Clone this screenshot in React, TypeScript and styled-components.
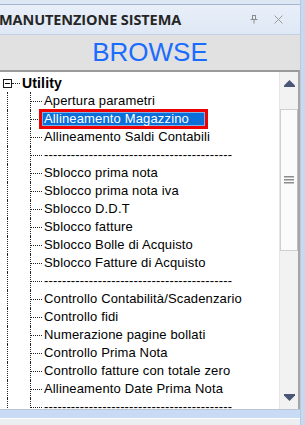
import React from "react";
import styled, { createGlobalStyle } from "styled-components";

const Global = createGlobalStyle`
  html, body {
    margin: 0;
    padding: 0;
    background: #dbe5f3;
  }
`;

const Frame = styled.div`
  width: 305px;
  height: 425px;
  display: flex;
  overflow: hidden;
  background: #dbe5f3;
`;

const Panel = styled.div`
  width: 300px;
  display: flex;
  flex-direction: column;
`;

const SideStrip = styled.div`
  flex: 1;
  background: #c8d8ef;
  border-left: 1px solid #b7c8e2;
`;

const TopStrip = styled.div`
  height: 4px;
  background: #dde6f3;
  border-bottom: 1px solid #a4b6d1;
`;

const TitleBar = styled.div`
  height: 29px;
  display: flex;
  align-items: center;
  background: linear-gradient(#e8eff9, #dfe8f5);
  border-bottom: 1px solid #c3d0e5;
  padding-right: 10px;
`;

const Title = styled.div`
  flex: 1;
  margin-left: -1px;
  font-family: "Open Sans", "Noto Sans", sans-serif;
  font-weight: 700;
  font-size: 14.5px;
  color: #262626;
  letter-spacing: -0.1px;
  white-space: nowrap;
`;

const TitleIcon = styled.span`
  width: 24px;
  display: flex;
  justify-content: center;
`;

const BrowseBand = styled.div`
  height: 35px;
  display: flex;
  align-items: center;
  justify-content: center;
  background: #e1e1e1;
  font-family: "Liberation Sans", Arial, sans-serif;
  font-size: 26px;
  color: #1a6cff;
`;

const TreeFrame = styled.div`
  height: 337px;
  display: flex;
  border-top: 2px solid #9a9a9a;
  border-right: 2px solid #a6a6a6;
  background: #fff;
`;

const Tree = styled.div`
  flex: 1;
  overflow: hidden;
  padding-top: 2px;
  font-family: "Liberation Sans", Arial, sans-serif;
  font-size: 13px;
  letter-spacing: 0.15px;
  color: #000;
`;

const Row = styled.div`
  height: 18px;
  display: flex;
  align-items: center;
`;

const ExpandBox = styled.span`
  box-sizing: border-box;
  width: 9px;
  height: 9px;
  margin-left: 3px;
  border: 1px solid #1a1a1a;
  display: flex;
  align-items: center;
  justify-content: center;
  &::after {
    content: "";
    width: 5px;
    height: 1px;
    background: #000;
  }
`;

const Connector = styled.span<{ $w: number }>`
  width: ${(p) => p.$w}px;
  border-top: 1px dotted #222;
`;

const Trunk = styled.span`
  align-self: stretch;
  margin-left: 7px;
  width: 22px;
  border-left: 1px dotted #222;
`;

const Branch = styled.span`
  align-self: stretch;
  display: flex;
  align-items: center;
  border-left: 1px dotted #222;
`;

const Label = styled.span<{ $bold?: boolean; $selected?: boolean }>`
  padding: 0 ${(p) => (p.$selected ? 16 : 2)}px 0 2px;
  line-height: 14px;
  white-space: nowrap;
  font-size: ${(p) => (p.$bold ? 14 : 13)}px;
  font-weight: ${(p) => (p.$bold ? 700 : 400)};
  background: ${(p) => (p.$selected ? "#0a6fd8" : "transparent")};
  color: ${(p) => (p.$selected ? "#fff" : "#000")};
  outline: ${(p) => (p.$selected ? "3px solid #f00000" : "none")};
  box-shadow: ${(p) => (p.$selected ? "inset 0 0 0 1px #7fb0ea" : "none")};
`;

const ScrollBar = styled.div`
  width: 18px;
  display: flex;
  flex-direction: column;
  align-items: stretch;
  background: #f2f2f2;
  border-left: 1px solid #e6e6e6;
`;

const ArrowBtn = styled.div`
  height: 23px;
  display: flex;
  align-items: center;
  justify-content: center;
`;

const Track = styled.div`
  flex: 1;
  display: flex;
  flex-direction: column;
  padding-top: 14px;
`;

const Thumb = styled.div`
  height: 140px;
  background: #fbfbfb;
  border: 1px solid #cfcfcf;
  border-right-color: #bdbdbd;
  display: flex;
  align-items: center;
  justify-content: center;
`;

const Footer = styled.div`
  flex: 1;
  border-top: 1px solid #b9c5d6;
  background: linear-gradient(#c9dbf4 0, #c9dbf4 8px, #fdfdfd 8px, #fdfdfd 9px, #eceef2 9px);
`;

const dashes = "-".repeat(42);

const items: string[] = [
  "Apertura parametri",
  "Allineamento Magazzino",
  "Allineamento Saldi Contabili",
  dashes,
  "Sblocco prima nota",
  "Sblocco prima nota iva",
  "Sblocco D.D.T",
  "Sblocco fatture",
  "Sblocco Bolle di Acquisto",
  "Sblocco Fatture di Acquisto",
  dashes,
  "Controllo Contabilità/Scadenzario",
  "Controllo fidi",
  "Numerazione pagine bollati",
  "Controllo Prima Nota",
  "Controllo fatture con totale zero",
  "Allineamento Date Prima Nota",
  dashes,
];

function Grip() {
  return (
    <svg width="10" height="8" viewBox="0 0 10 8">
      <rect x="0" y="0" width="10" height="1.5" fill="#8c8c8c" />
      <rect x="0" y="3" width="10" height="1.5" fill="#8c8c8c" />
      <rect x="0" y="6" width="10" height="1.5" fill="#8c8c8c" />
    </svg>
  );
}

export default function App() {
  return (
    <Frame>
      <Global />
      <Panel>
        <TopStrip />
        <TitleBar>
          <Title>MANUTENZIONE SISTEMA</Title>
          <TitleIcon>
            <svg width="8" height="9" viewBox="0 0 8 9">
              <path d="M2 0.5h4M2.5 0.5v4M5.5 0.5v4M0.5 4.5h7M4 4.5v4" stroke="#8c8c8c" fill="none" />
            </svg>
          </TitleIcon>
          <TitleIcon>
            <svg width="9" height="9" viewBox="0 0 9 9">
              <path d="M0.5 0.5l8 8M8.5 0.5l-8 8" stroke="#9a9a9a" strokeWidth="1" />
            </svg>
          </TitleIcon>
        </TitleBar>
        <BrowseBand>BROWSE</BrowseBand>
        <TreeFrame>
          <Tree>
            <Row>
              <ExpandBox />
              <Connector $w={8} />
              <Label $bold>Utility</Label>
            </Row>
            {items.map((text, i) => (
              <Row key={i}>
                <Trunk />
                <Branch>
                  <Connector $w={11} />
                </Branch>
                <Label $selected={i === 1}>{text}</Label>
              </Row>
            ))}
          </Tree>
          <ScrollBar>
            <ArrowBtn>
              <svg width="11" height="7" viewBox="0 0 11 7">
                <path d="M5.5 0L11 5.5V7H0V5.5Z" fill="#4a5676" />
              </svg>
            </ArrowBtn>
            <Track>
              <Thumb>
                <Grip />
              </Thumb>
            </Track>
            <ArrowBtn>
              <svg width="11" height="7" viewBox="0 0 11 7">
                <path d="M0 0H11V1.5L5.5 7L0 1.5Z" fill="#4a5676" />
              </svg>
            </ArrowBtn>
          </ScrollBar>
        </TreeFrame>
        <Footer />
      </Panel>
      <SideStrip />
    </Frame>
  );
}
